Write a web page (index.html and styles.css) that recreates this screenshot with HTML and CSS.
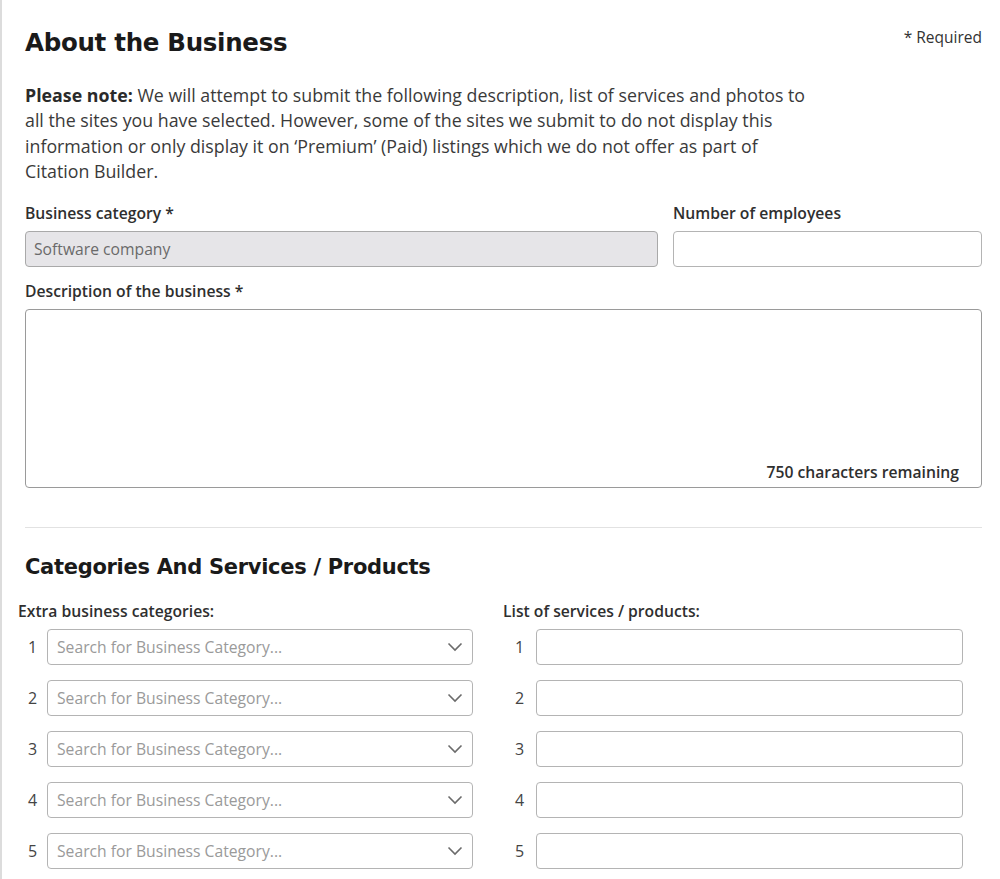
FILE: index.html
```html
<!DOCTYPE html>
<html>
<head>
  <meta charset="UTF-8">
  <title>About the Business</title>
  <link rel="stylesheet" href="styles.css">
</head>
<body>
  <div class="page">
    <div class="section-head">
      <h1 class="title">About the Business</h1>
      <span class="required-note">* Required</span>
    </div>

    <p class="note">
      <strong>Please note:</strong> We will attempt to submit the following description, list of services and photos to all the sites you have selected. However, some of the sites we submit to do not display this information or only display it on ‘Premium’ (Paid) listings which we do not offer as part of Citation Builder.
    </p>

    <div class="field-row">
      <div class="field">
        <label class="label">Business category *</label>
        <input type="text" class="text-input disabled-input" value="Software company" readonly>
      </div>
      <div class="field">
        <label class="label">Number of employees</label>
        <input type="text" class="text-input">
      </div>
    </div>

    <div class="field">
      <label class="label">Description of the business *</label>
      <div class="textarea-box">
        <span class="char-count">750 characters remaining</span>
      </div>
    </div>

    <hr class="divider">

    <h2 class="subtitle">Categories And Services / Products</h2>

    <div class="lists">
      <div class="list-col">
        <div class="list-label">Extra business categories:</div>
        <div class="list-row"><span class="num">1</span><div class="select-box"><span class="placeholder">Search for Business Category...</span><svg class="chevron" width="16" height="10" viewBox="0 0 16 10"><path d="M1.5 1.5 L8 8 L14.5 1.5" fill="none" stroke="#6b6b6b" stroke-width="1.6"/></svg></div></div>
        <div class="list-row"><span class="num">2</span><div class="select-box"><span class="placeholder">Search for Business Category...</span><svg class="chevron" width="16" height="10" viewBox="0 0 16 10"><path d="M1.5 1.5 L8 8 L14.5 1.5" fill="none" stroke="#6b6b6b" stroke-width="1.6"/></svg></div></div>
        <div class="list-row"><span class="num">3</span><div class="select-box"><span class="placeholder">Search for Business Category...</span><svg class="chevron" width="16" height="10" viewBox="0 0 16 10"><path d="M1.5 1.5 L8 8 L14.5 1.5" fill="none" stroke="#6b6b6b" stroke-width="1.6"/></svg></div></div>
        <div class="list-row"><span class="num">4</span><div class="select-box"><span class="placeholder">Search for Business Category...</span><svg class="chevron" width="16" height="10" viewBox="0 0 16 10"><path d="M1.5 1.5 L8 8 L14.5 1.5" fill="none" stroke="#6b6b6b" stroke-width="1.6"/></svg></div></div>
        <div class="list-row"><span class="num">5</span><div class="select-box"><span class="placeholder">Search for Business Category...</span><svg class="chevron" width="16" height="10" viewBox="0 0 16 10"><path d="M1.5 1.5 L8 8 L14.5 1.5" fill="none" stroke="#6b6b6b" stroke-width="1.6"/></svg></div></div>
      </div>
      <div class="list-col services">
        <div class="list-label">List of services / products:</div>
        <div class="list-row"><span class="num">1</span><input type="text" class="text-input"></div>
        <div class="list-row"><span class="num">2</span><input type="text" class="text-input"></div>
        <div class="list-row"><span class="num">3</span><input type="text" class="text-input"></div>
        <div class="list-row"><span class="num">4</span><input type="text" class="text-input"></div>
        <div class="list-row"><span class="num">5</span><input type="text" class="text-input"></div>
      </div>
    </div>
  </div>
</body>
</html>
```

FILE: styles.css
```css
body {
  font-family: "Open Sans", "Noto Sans", sans-serif;
  margin: 0;
  background: white;
  color: #333;
}

.page {
  border-left: 2px solid #dcdcdc;
  padding: 28px 18px 0 23px;
  min-height: 879px;
  box-sizing: border-box;
}

.section-head {
  display: flex;
  justify-content: space-between;
  align-items: flex-start;
}

.title {
  font-family: "DejaVu Sans", sans-serif;
  font-size: 24.5px;
  font-weight: 700;
  line-height: 30px;
  color: #1a1a1a;
  margin: 0;
  letter-spacing: -0.3px;
}

.required-note {
  font-size: 15.5px;
  line-height: 20px;
  margin-top: -1px;
  color: #333;
}

.note {
  font-size: 17.8px;
  line-height: 25.4px;
  max-width: 795px;
  margin: 25px 0 18px;
  color: #3a3a3a;
}

.note strong {
  font-weight: 700;
  color: #2a2a2a;
}

.field-row {
  display: grid;
  grid-template-columns: 1fr 309px;
  gap: 15px;
}

.field {
  display: flex;
  flex-direction: column;
}

.label {
  font-size: 15.7px;
  font-weight: 600;
  line-height: 20px;
  color: #2f2f2f;
  margin-bottom: 8px;
}

.text-input {
  height: 36px;
  box-sizing: border-box;
  border: 1px solid #b4b4b4;
  border-radius: 4px;
  padding: 0 8px;
  font-family: inherit;
  font-size: 15.7px;
  color: #333;
  background: white;
  outline: none;
}

.field-row .field {
  margin-bottom: 14px;
}

.disabled-input {
  background: #e6e5e8;
  color: #6a6a6a;
  border-color: #a9a9a9;
}

.textarea-box {
  height: 179px;
  box-sizing: border-box;
  border: 1px solid #9a9a9a;
  border-radius: 4px;
  display: flex;
  align-items: flex-end;
  justify-content: flex-end;
  padding: 0 22px 4px 0;
}

.char-count {
  font-size: 15.7px;
  font-weight: 600;
  color: #2f2f2f;
}

.divider {
  border: none;
  border-top: 1px solid #e2e2e2;
  margin: 39px 0 0;
}

.subtitle {
  font-family: "DejaVu Sans", sans-serif;
  font-size: 21px;
  font-weight: 700;
  line-height: 28px;
  color: #1a1a1a;
  margin: 25px 0 20px;
  letter-spacing: -0.3px;
}

.lists {
  display: grid;
  grid-template-columns: 455px 460px;
  gap: 30px;
  margin-left: -7px;
}

.list-label {
  font-size: 15.7px;
  font-weight: 600;
  line-height: 20px;
  color: #2f2f2f;
  margin-bottom: 8px;
}

.list-row {
  display: flex;
  align-items: center;
  margin-bottom: 15px;
}

.num {
  width: 29px;
  text-align: center;
  font-size: 16px;
  color: #444;
  flex-shrink: 0;
}

.services .num {
  width: 33px;
}

.list-row .text-input {
  flex: 1;
}

.select-box {
  flex: 1;
  height: 36px;
  box-sizing: border-box;
  border: 1px solid #b4b4b4;
  border-radius: 4px;
  display: flex;
  align-items: center;
  justify-content: space-between;
  padding: 0 9px 0 9px;
}

.placeholder {
  font-size: 15.7px;
  color: #9a9a9a;
}

.chevron {
  display: block;
}
```
